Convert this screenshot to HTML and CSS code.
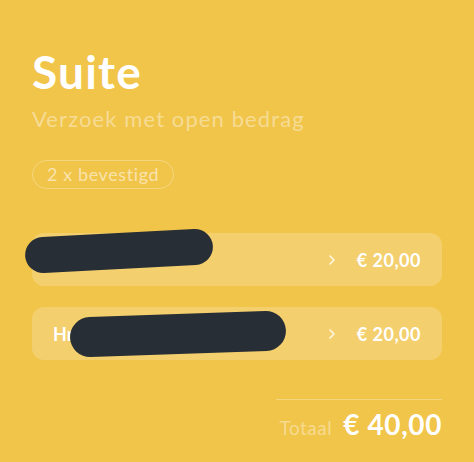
FILE: index.html
```html
<!DOCTYPE html>
<html lang="nl">
<head>
  <meta charset="UTF-8">
  <meta name="viewport" content="width=device-width, initial-scale=1.0">
  <title>Suite</title>
  <link rel="stylesheet" href="styles.css">
</head>
<body>
  <main class="request">
    <h1 class="request-title">Suite</h1>
    <p class="request-subtitle">Verzoek met open bedrag</p>
    <span class="status-pill">2 x bevestigd</span>

    <ul class="payments">
      <li class="payment-row">
        <span class="payment-name"></span>
        <svg class="chevron" width="6" height="10" viewBox="0 0 6 10"><polyline points="1,1 5,5 1,9" /></svg>
        <span class="payment-amount">&euro; 20,00</span>
        <span class="redact redact-one"></span>
      </li>
      <li class="payment-row">
        <span class="payment-name">Hr</span>
        <svg class="chevron" width="6" height="10" viewBox="0 0 6 10"><polyline points="1,1 5,5 1,9" /></svg>
        <span class="payment-amount">&euro; 20,00</span>
        <span class="redact redact-two"></span>
      </li>
    </ul>

    <div class="total">
      <span class="total-label">Totaal</span>
      <span class="total-amount">&euro; 40,00</span>
    </div>
  </main>
</body>
</html>
```

FILE: styles.css
```css
/* Base */
body {
  margin: 0;
  background: #f1c44a;
  font-family: Lato, "Open Sans", sans-serif;
  color: #fff;
}

.request {
  padding: 44px 32px 0 32px;
}

/* Header */
.request-title {
  margin: 0;
  font-size: 46px;
  font-weight: 700;
  line-height: 56px;
  letter-spacing: 1.2px;
}

.request-subtitle {
  margin: 5px 0 0;
  font-size: 22px;
  line-height: 28px;
  letter-spacing: 1.1px;
  color: rgba(255, 255, 255, 0.42);
}

.status-pill {
  display: block;
  width: fit-content;
  margin-top: 27px;
  padding: 0 14px;
  height: 27px;
  line-height: 27px;
  border: 1px solid rgba(255, 255, 255, 0.3);
  border-radius: 15px;
  font-size: 18px;
  letter-spacing: 0.6px;
  color: rgba(255, 255, 255, 0.55);
}

/* Payment rows */
.payments {
  list-style: none;
  margin: 44px 0 0;
  padding: 0;
  display: flex;
  flex-direction: column;
  gap: 21px;
}

.payment-row {
  position: relative;
  display: flex;
  align-items: center;
  height: 53px;
  padding: 0 21px;
  background: rgba(255, 255, 255, 0.2);
  border-radius: 12px;
}

.payment-name {
  flex: 1;
  font-size: 18px;
  font-weight: 700;
}

.chevron {
  margin-right: 22px;
  fill: none;
  stroke: rgba(255, 255, 255, 0.85);
  stroke-width: 1.5;
  stroke-linecap: round;
  stroke-linejoin: round;
}

.payment-amount {
  font-size: 18px;
  font-weight: 700;
  letter-spacing: 0.5px;
}

.redact {
  position: absolute;
  background: #282e35;
  border-radius: 20px;
}

.redact-one {
  left: -7px;
  top: 0;
  width: 188px;
  height: 36px;
  transform: rotate(-3deg);
}

.redact-two {
  left: 38px;
  top: 7px;
  width: 216px;
  height: 40px;
  transform: rotate(-2deg);
}

/* Total */
.total {
  margin: 39px 0 0 auto;
  width: 166px;
  border-top: 1px solid rgba(255, 255, 255, 0.3);
  padding-top: 7px;
  display: flex;
  align-items: baseline;
  justify-content: flex-end;
  gap: 11px;
}

.total-label {
  font-size: 19px;
  letter-spacing: 0.5px;
  color: rgba(255, 255, 255, 0.4);
}

.total-amount {
  font-size: 28px;
  font-weight: 700;
  line-height: 34px;
  letter-spacing: 0.6px;
}
```
